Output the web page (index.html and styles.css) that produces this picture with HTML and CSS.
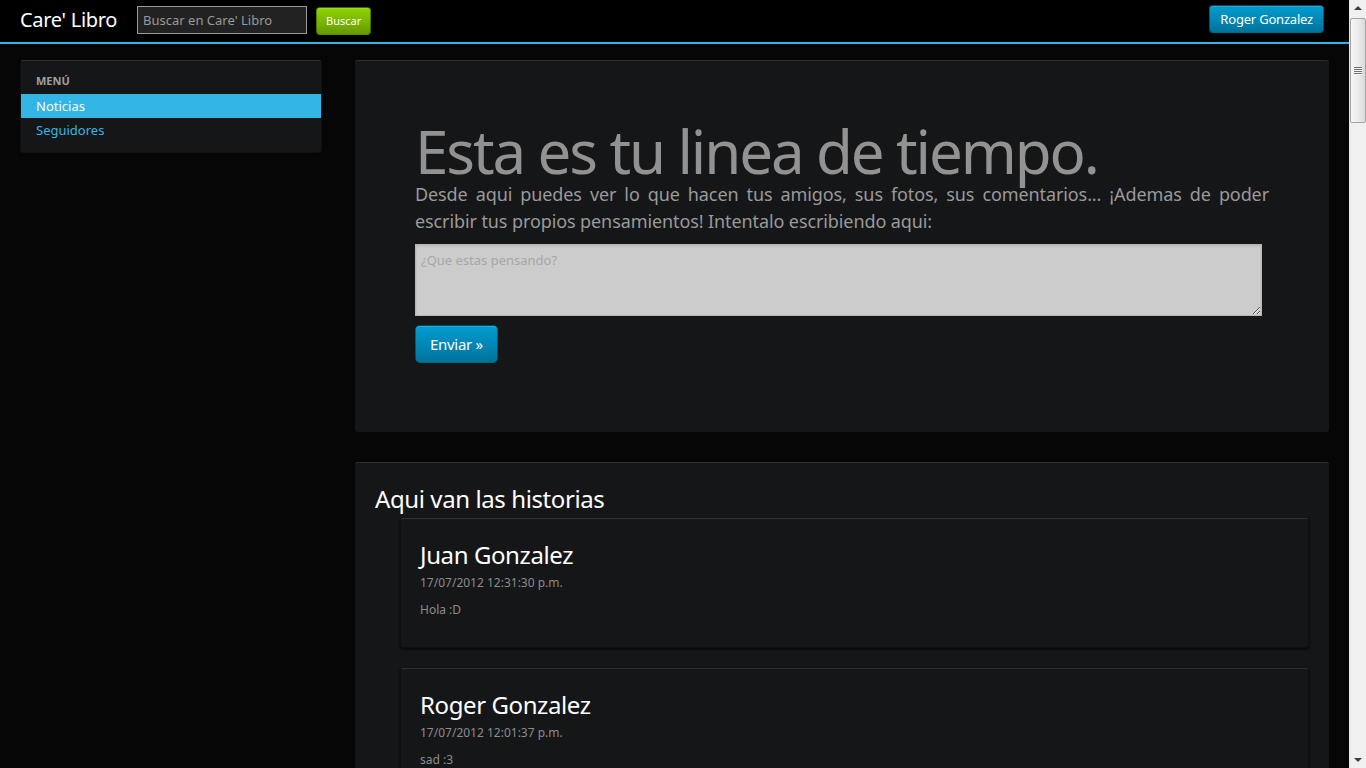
FILE: index.html
```html
<!DOCTYPE html>
<html lang="es">
<head>
<meta charset="utf-8">
<title>Care' Libro</title>
<link rel="stylesheet" href="styles.css">
</head>
<body>
<header class="navbar">
  <a class="brand" href="#">Care' Libro</a>
  <form class="navbar-search">
    <input class="search-query" type="text" placeholder="Buscar en Care' Libro">
    <button class="btn btn-success btn-small" type="button">Buscar</button>
  </form>
  <a class="btn btn-primary user-btn" href="#">Roger Gonzalez</a>
</header>

<div class="container">
  <aside class="well sidebar-nav">
    <ul class="nav-list">
      <li class="nav-header">Menú</li>
      <li class="active"><a href="#">Noticias</a></li>
      <li><a href="#">Seguidores</a></li>
    </ul>
  </aside>

  <main class="content">
    <section class="hero-unit">
      <h1>Esta es tu linea de tiempo.</h1>
      <p class="lead">Desde aqui puedes ver lo que hacen tus amigos, sus fotos, sus comentarios... ¡Ademas de poder escribir tus propios pensamientos! Intentalo escribiendo aqui:</p>
      <textarea class="post-box" placeholder="¿Que estas pensando?"></textarea>
      <p class="actions"><a class="btn btn-primary btn-large" href="#">Enviar »</a></p>
    </section>

    <section class="stories">
      <h2 class="stories-title">Aqui van las historias</h2>
      <article class="well story">
        <h2 class="story-name">Juan Gonzalez</h2>
        <div class="story-date">17/07/2012 12:31:30 p.m.</div>
        <p class="story-text">Hola :D</p>
      </article>
      <article class="well story">
        <h2 class="story-name">Roger Gonzalez</h2>
        <div class="story-date">17/07/2012 12:01:37 p.m.</div>
        <p class="story-text">sad :3</p>
      </article>
    </section>
  </main>
</div>

<div class="scrollbar" aria-hidden="true">
  <span class="sb-arrow sb-up"></span>
  <span class="sb-thumb"></span>
  <span class="sb-track"></span>
  <span class="sb-arrow sb-down"></span>
</div>
</body>
</html>
```

FILE: styles.css
```css
* {
  box-sizing: border-box;
}

body {
  margin: 0;
  padding-right: 17px;
  background: #060606;
  color: #999999;
  font-family: "Noto Sans", "Open Sans", "DejaVu Sans", sans-serif;
  font-size: 13px;
  line-height: 18px;
}

a {
  text-decoration: none;
}

/* ---------- fake window scrollbar ---------- */
.scrollbar {
  position: fixed;
  top: 0;
  right: 0;
  width: 17px;
  height: 100vh;
  display: flex;
  flex-direction: column;
  background: #f0f0f0;
  border-left: 1px solid #e6e6e6;
}

.sb-arrow {
  position: relative;
  height: 17px;
  flex: none;
}
.sb-arrow::after {
  content: "";
  position: absolute;
  left: 4px;
  width: 0;
  height: 0;
  border-left: 4px solid transparent;
  border-right: 4px solid transparent;
}
.sb-up::after {
  top: 6px;
  border-bottom: 4px solid #3c3c3c;
}
.sb-down::after {
  top: 7px;
  border-top: 4px solid #3c3c3c;
}

.sb-thumb {
  position: relative;
  height: 105px;
  margin: 1px 0 0 0;
  flex: none;
  background: linear-gradient(90deg, #f6f6f6 0%, #ececec 50%, #d8d8d8 100%);
  border: 1px solid #a3a3a3;
  border-radius: 2px;
}
.sb-thumb::after {
  content: "";
  position: absolute;
  left: 3px;
  top: 48px;
  width: 8px;
  height: 8px;
  background: repeating-linear-gradient(#707070 0 1px, #f4f4f4 1px 2px);
}

.sb-track {
  flex: 1;
}

/* ---------- navbar ---------- */
.navbar {
  display: flex;
  align-items: center;
  height: 44px;
  padding: 0 25px 0 20px;
  background: #000000;
  border-bottom: 2px solid #33b5e5;
}

.brand {
  color: #ffffff;
  font-size: 20px;
  line-height: 20px;
  letter-spacing: -0.3px;
  margin-top: -2px;
}

.navbar-search {
  display: flex;
  align-items: center;
  margin: 0 0 0 20px;
}

.search-query {
  width: 170px;
  height: 28px;
  margin-top: -2px;
  padding: 4px 5px;
  background: #222222;
  border: 1px solid #9a9a9a;
  color: #bbbbbb;
  font-family: inherit;
  font-size: 13px;
  outline: none;
}
.search-query::placeholder {
  color: #9a9a9a;
}

.btn {
  display: inline-block;
  border: 1px solid rgba(0, 0, 0, 0.35);
  border-radius: 4px;
  color: #ffffff;
  font-family: inherit;
  text-align: center;
  cursor: pointer;
  box-shadow: inset 0 1px 0 rgba(255, 255, 255, 0.15);
}

.btn-success {
  background: linear-gradient(#8fd400, #659a00);
}

.btn-primary {
  background: linear-gradient(#009dd0, #00739c);
}

.btn-small {
  height: 28px;
  margin-left: 9px;
  padding: 5px 9px;
  font-size: 11px;
  line-height: 16px;
}

.user-btn {
  margin-left: auto;
  margin-top: -5px;
  height: 28px;
  padding: 4px 10px;
  font-size: 13px;
  line-height: 18px;
  letter-spacing: -0.2px;
}

.btn-large {
  padding: 9px 14px;
  font-size: 15px;
  line-height: 18px;
  letter-spacing: -0.3px;
  border-radius: 5px;
}

/* ---------- layout ---------- */
.container {
  display: grid;
  grid-template-columns: 302px 1fr;
  column-gap: 33px;
  align-items: start;
  padding: 16px 20px 0;
}

.well {
  background: #151618;
  border: 1px solid #0f1011;
  border-top-color: #2f3033;
  box-shadow: 0 1px 2px rgba(0, 0, 0, 0.6);
  border-radius: 3px;
}

/* ---------- sidebar ---------- */
.sidebar-nav {
  padding: 9px 0 10px;
}

.nav-list {
  list-style: none;
  margin: 0;
  padding: 0;
}

.nav-list li a,
.nav-header {
  display: block;
  padding: 3px 15px;
  line-height: 18px;
}

.nav-header {
  padding: 2px 15px 4px;
  color: #a0a0a0;
  font-size: 11px;
  font-weight: bold;
  text-transform: uppercase;
}

.nav-list a {
  color: #33b5e5;
}

.nav-list .active a {
  background: #33b5e5;
  color: #ffffff;
}

/* ---------- hero ---------- */
.hero-unit {
  background: #151618;
  border-top: 1px solid #2f3033;
  border-radius: 3px;
  padding: 60px 60px 60px;
  margin-bottom: 30px;
}

.hero-unit h1 {
  margin: 0;
  color: #929292;
  font-size: 60px;
  font-weight: normal;
  line-height: 60px;
  letter-spacing: -2.1px;
}

.lead {
  margin: 0 0 9px;
  color: #9a9a9a;
  font-size: 18px;
  line-height: 27px;
  letter-spacing: -0.1px;
  text-align: justify;
}

.post-box {
  display: block;
  width: 847px;
  height: 72px;
  margin: 0 0 9px;
  padding: 6px 5px;
  background: #cccccc;
  border: 1px solid #b8b8b8;
  box-shadow: inset 0 1px 2px rgba(0, 0, 0, 0.12);
  font-family: inherit;
  font-size: 13px;
  line-height: 18px;
  color: #333333;
  outline: none;
}
.post-box::placeholder {
  color: #a6a6a6;
}

.actions {
  margin: 0 0 9px;
}

/* ---------- stories ---------- */
.stories {
  background: #151618;
  border-top: 1px solid #2f3033;
  border-radius: 3px;
  padding: 18px 20px 20px;
}

.stories-title {
  margin: 0 0 1px;
  color: #ffffff;
  font-size: 24px;
  font-weight: normal;
  line-height: 36px;
  letter-spacing: -0.4px;
}

.story {
  margin: 0 0 20px 25px;
  padding: 18px 19px 19px;
  box-shadow: 0 1px 3px rgba(0, 0, 0, 0.9);
}

.story-name {
  margin: 0 0 1px;
  color: #ffffff;
  font-size: 24px;
  font-weight: normal;
  line-height: 36px;
  letter-spacing: -0.4px;
}

.story-date {
  color: #8c8c8c;
  font-size: 12px;
  line-height: 18px;
}

.story-text {
  margin: 9px 0 9px;
  color: #8c8c8c;
  font-size: 12px;
  line-height: 18px;
}
```
